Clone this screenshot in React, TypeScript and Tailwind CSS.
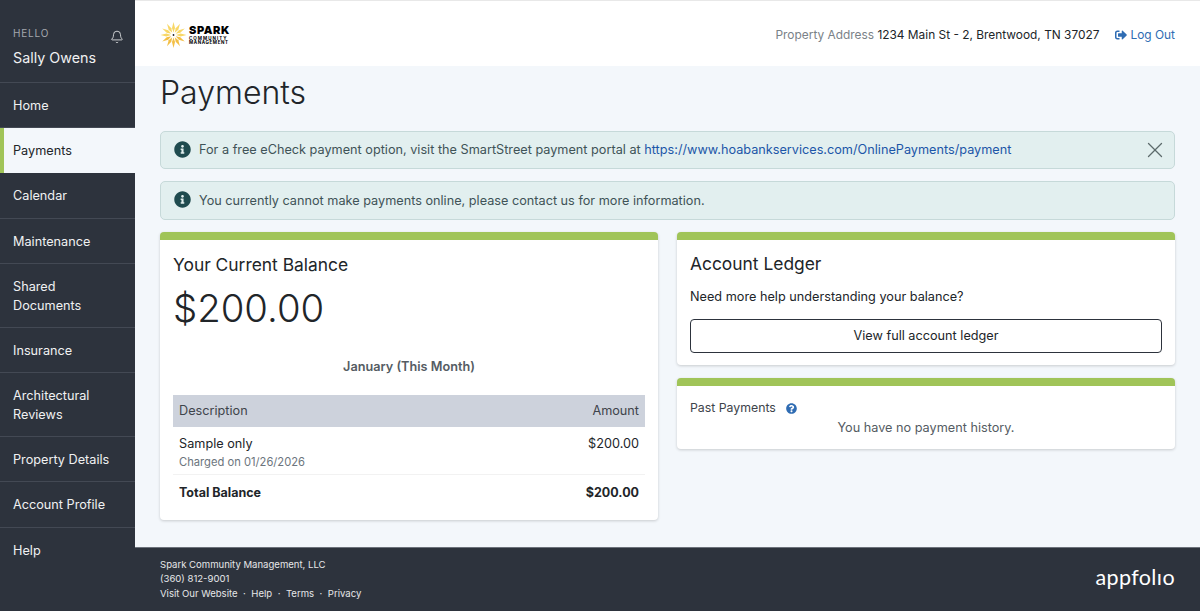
import { FC } from "react";
import { FaInfoCircle, FaQuestionCircle, FaSignOutAlt } from "react-icons/fa";
import { Bell, X } from "lucide-react";

const navItems = [
  { label: "Home", h: "h-[45px]" },
  { label: "Payments", h: "h-[45px]", active: true },
  { label: "Calendar", h: "h-[46px]" },
  { label: "Maintenance", h: "h-[45px]" },
  { label: "Shared Documents", h: "h-[64px]" },
  { label: "Insurance", h: "h-[45px]" },
  { label: "Architectural Reviews", h: "h-[64px]" },
  { label: "Property Details", h: "h-[45px]" },
  { label: "Account Profile", h: "h-[46px]" },
  { label: "Help", h: "h-[45px]", last: true },
];

const rays = [0, 30, 60, 90, 120, 150, 180, 210, 240, 270, 300, 330];

const SparkLogo: FC = () => (
  <div className="flex items-center gap-[2px]">
    <svg width="27" height="26" viewBox="-13.5 -13 27 26">
      {rays.map((deg, idx) => (
        <path
          key={idx}
          d="M0 -2.5 L1.5 -7 L0 -13 L-1.5 -7 Z"
          fill={deg > 90 && deg < 270 ? "#f3bf45" : "#f8d766"}
          transform={`rotate(${deg})`}
        />
      ))}
      <circle r="0.9" fill="#222" />
    </svg>
    <div className="flex flex-col text-black font-bold leading-none">
      <span className="text-[11px] tracking-[0.6px] font-black leading-[9px]">SPARK</span>
      <span className="text-[4.5px] tracking-[1px] leading-[5px] mt-[1px]">COMMUNITY</span>
      <span className="text-[4.5px] tracking-[0.6px] leading-[4px]">MANAGEMENT</span>
    </div>
  </div>
);

const Alert: FC<{ children: React.ReactNode; close?: boolean; className?: string }> = ({ children, close, className }) => (
  <div className={`flex items-center rounded-[5px] border border-[#c6d9d9] bg-[#e2efef] pl-[13px] pr-[6px] text-[#3f5357] ${className}`}>
    <FaInfoCircle className="text-[17px] text-[#1f4b4f] mr-[8px] mb-[2px] shrink-0" />
    <p className="flex-1">{children}</p>
    {close && <X size={26} strokeWidth={1.2} className="text-[#5d6a6c]" />}
  </div>
);

const Card: FC<{ children: React.ReactNode; className?: string }> = ({ children, className }) => (
  <div className={`bg-white rounded-[4px] border-t-[8px] border-[#a0c458] shadow-[0_1px_3px_rgba(0,0,0,0.18)] ${className}`}>
    {children}
  </div>
);

const App: FC = () => {
  return (
    <div className="flex h-[611px] overflow-hidden bg-[#f3f7fb] font-['Inter',sans-serif] text-[12.7px] text-[#212529]">
      <aside className="w-[135px] shrink-0 bg-[#2d333d] text-white flex flex-col pt-[1px]">
        <div className="h-[82px] shrink-0 border-b border-[#434954] pl-[13px] pr-[11px] pt-[25px] relative">
          <p className="text-[10px] tracking-[0.8px] text-[#a4a8ae] leading-[14px]">HELLO</p>
          <p className="text-[14.3px] leading-[20px] mt-[8px] text-[#f0f1f2]">Sally Owens</p>
          <Bell size={14} strokeWidth={1.5} className="absolute right-[11px] top-[29px] text-[#e0e2e4]" />
        </div>
        {navItems.map((item, idx) => (
          <div
            key={idx}
            className={
              item.active
                ? `${item.h} shrink-0 flex items-center bg-[#f3f7fb] text-[#212529] border-l-[4px] border-[#a0c458] pl-[9px]`
                : item.last
                  ? `${item.h} shrink-0 flex items-center px-[13px] leading-[19px] text-[#f0f1f2]`
                  : `${item.h} shrink-0 flex items-center border-b border-[#434954] px-[13px] leading-[19px] text-[#f0f1f2]`
            }
          >
            {item.label}
          </div>
        ))}
      </aside>
      <div className="flex-1 min-w-0 flex flex-col">
        <header className="h-[66px] shrink-0 bg-white border-t border-[#e8e8e8] flex items-center justify-between pl-[25px] pr-[25px] pt-[3px]">
          <SparkLogo />
          <div className="flex items-center gap-[16px] text-[11.9px]">
            <p className="text-[#7a8288]">
              Property Address <span className="text-[#212529]">1234 Main St - 2, Brentwood, TN 37027</span>
            </p>
            <a className="flex items-center gap-[3px] text-[#2f6cb3]">
              <FaSignOutAlt className="text-[12px]" /> Log Out
            </a>
          </div>
        </header>
        <main className="flex-1 min-h-0 px-[25px]">
          <h1 className="text-[32px] font-light leading-[40px] mt-[7px] mb-[18px] text-[#212529]">Payments</h1>
          <div className="flex flex-col gap-[12px]">
            <Alert close className="h-[38px]">
              For a free eCheck payment option, visit the SmartStreet payment portal at{" "}
              <a className="text-[#1c56a8]">https://www.hoabankservices.com/OnlinePayments/payment</a>
            </Alert>
            <Alert className="h-[39px]">You currently cannot make payments online, please contact us for more information.</Alert>
          </div>
          <div className="grid grid-cols-2 gap-[19px] mt-[12px]">
            <Card className="h-[288px] px-[13px]">
              <h2 className="text-[17.4px] leading-[24px] mt-[13px]">Your Current Balance</h2>
              <p className="text-[38.3px] leading-[48px] font-light mt-[7px]">$200.00</p>
              <p className="text-center font-semibold text-[#555c63] leading-[18px] mt-[26px]">January (This Month)</p>
              <div className="mt-[19px] h-[32px] bg-[#cdd2dc] flex items-center justify-between px-[6px] text-[#3e444b]">
                <span>Description</span>
                <span>Amount</span>
              </div>
              <div className="flex justify-between px-[6px] pt-[8px] h-[48px] border-b border-[#f2f2f2]">
                <div>
                  <p className="leading-[18px]">Sample only</p>
                  <p className="text-[11.2px] leading-[18px] text-[#6c757d]">Charged on 01/26/2026</p>
                </div>
                <span className="leading-[18px]">$200.00</span>
              </div>
              <div className="flex justify-between px-[6px] pt-[9px] font-bold leading-[18px] text-[12.5px]">
                <span>Total Balance</span>
                <span>$200.00</span>
              </div>
            </Card>
            <div className="flex flex-col gap-[13px]">
              <Card className="h-[133px] px-[13px]">
                <h2 className="text-[17.4px] leading-[24px] mt-[12px]">Account Ledger</h2>
                <p className="leading-[18px] mt-[12px]">Need more help understanding your balance?</p>
                <button className="w-full h-[34px] mt-[13px] rounded-[4px] border border-[#2d333d] text-center text-[#212529]">
                  View full account ledger
                </button>
              </Card>
              <Card className="h-[71px] px-[13px]">
                <div className="flex items-center gap-[10px] mt-[14px] h-[16px] text-[12.3px] text-[#3e444b]">
                  Past Payments
                  <FaQuestionCircle className="text-[11px] text-[#2f6cb3]" />
                </div>
                <p className="text-center text-[#555c63] leading-[18px] mt-[3px]">You have no payment history.</p>
              </Card>
            </div>
          </div>
        </main>
        <footer className="h-[64px] shrink-0 bg-[#2d333d] border-t border-[#6c727b] text-[#e6e7e9] text-[9.55px] leading-[14.4px] flex justify-between px-[25px] pt-[10px]">
          <div>
            <p>Spark Community Management, LLC</p>
            <p>(360) 812-9001</p>
            <p className="flex gap-[5.5px]">
              <span>Visit Our Website</span>
              <span>·</span>
              <span>Help</span>
              <span>·</span>
              <span>Terms</span>
              <span>·</span>
              <span>Privacy</span>
            </p>
          </div>
          <span className="text-[21.5px] leading-[26px] mt-[6px] font-['Lato',sans-serif] text-white tracking-[0.4px]">
            appfolıo
          </span>
        </footer>
      </div>
    </div>
  );
};

export default App;
